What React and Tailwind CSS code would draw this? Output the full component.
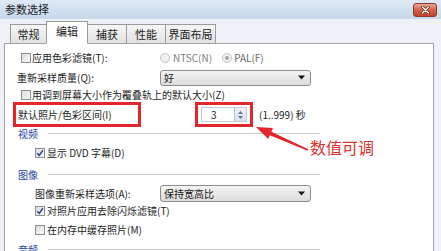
const font = "font-['Noto_Sans_CJK_SC','Noto_Sans',sans-serif]";

function Check({ on }) {
  return (
    <span className="w-[10px] h-[10px] shrink-0 border border-[#8f8f8f] bg-gradient-to-br from-[#dcdcdc] to-[#fbfbfb] flex items-center justify-center">
      {on && (
        <svg width="8" height="8" viewBox="0 0 8 8">
          <path d="M1.2 4.2 L3.2 6.4 L6.9 1.3" fill="none" stroke="#3a4f8a" strokeWidth="1.6" />
        </svg>
      )}
    </span>
  );
}

function Radio({ on }) {
  return (
    <span className="w-[10px] h-[10px] shrink-0 rounded-full border border-[#c3c3c3] bg-[#f1f1f1] flex items-center justify-center">
      {on && <span className="w-[4px] h-[4px] rounded-full bg-[#a5a5a5]" />}
    </span>
  );
}

function Select({ value, h = 'h-[16px]' }) {
  return (
    <div className={`w-[151px] ${h} border border-[#8d8d8d] rounded-[3px] bg-gradient-to-b from-[#f4f4f4] to-[#dcdcdc] flex items-center justify-between pl-[3px] pr-[5px]`}>
      <span className="text-[10px] text-[#1a1a1a]">{value}</span>
      <svg width="7" height="5" viewBox="0 0 7 5">
        <path d="M0 0.5 H7 L3.5 4.5 Z" fill="#111" />
      </svg>
    </div>
  );
}

function Header({ text }) {
  return (
    <div className="w-[315px] pl-[13px] flex items-center gap-[10px] h-full">
      <span className="text-[10px] text-[#2547a0]">{text}</span>
      <div className="flex-1 border-t border-[#c9cdd2] border-b border-b-white" />
    </div>
  );
}

const tabs = [
  { t: '常规', w: 'w-[37px]' },
  { t: '编辑', w: 'w-[42px]', on: true },
  { t: '捕获', w: 'w-[40px]' },
  { t: '性能', w: 'w-[40px]' },
  { t: '界面布局', w: 'w-[51px]' },
];

export default function App() {
  return (
    <div className={`w-[441px] h-[251px] overflow-hidden relative bg-[#eef1f5] flex flex-col ${font}`}>
      {/* title bar */}
      <div className="h-[19px] shrink-0 flex items-center justify-between pl-[5px] pr-[4px] bg-gradient-to-b from-[#dfeaf6] to-[#c6d8ec]">
        <span className="text-[11px] text-[#1c1c1c] leading-none">参数选择</span>
        <div className="w-[24px] h-[14px] rounded-[3px] border border-[#8c3b2d] bg-gradient-to-b from-[#e9a897] via-[#d2604a] to-[#c1412c] flex items-center justify-center">
          <svg width="9" height="8" viewBox="0 0 9 8">
            <path d="M1.5 1 L7.5 7 M7.5 1 L1.5 7" stroke="#5a1c12" strokeWidth="2.6" strokeLinecap="round" />
            <path d="M1.5 1 L7.5 7 M7.5 1 L1.5 7" stroke="#fff" strokeWidth="1.5" strokeLinecap="round" />
          </svg>
        </div>
      </div>

      {/* tabs */}
      <div className="h-[24px] shrink-0 flex items-end pl-[10px] relative z-10">
        {tabs.map((tab, i) => (
          <div
            key={tab.t}
            className={`${tab.w} flex items-center justify-center text-[11px] leading-none text-[#1c1c1c] border border-[#9a9a9a] ${i > 0 ? '-ml-px' : ''} ${
              tab.on
                ? 'h-[23px] bg-white border-b-white relative z-10 -mb-px pb-[2px]'
                : 'h-[19px] bg-gradient-to-b from-[#f6f6f6] to-[#e2e2e2] border-b-0'
            }`}
          >
            {tab.t}
          </div>
        ))}
      </div>

      {/* panel */}
      <div className="flex-1 ml-[4px] mr-[7px] bg-white border border-[#a3a3a3] flex flex-col pt-[5px] text-[10px] leading-none text-[#1e1e1e]">
        <div className="h-[18px] shrink-0 flex items-center pl-[16px]">
          <div className="w-[139px] flex items-center gap-[1px]">
            <Check />
            <span>应用色彩滤镜(T):</span>
          </div>
          <Radio />
          <span className="ml-[3px] text-[#7c7c7c]">NTSC(N)</span>
          <span className="ml-[10px]"><Radio on /></span>
          <span className="ml-[2px] text-[#6a6a6a]">PAL(F)</span>
        </div>

        <div className="h-[21px] shrink-0 flex items-center pl-[12px]">
          <span className="w-[143px]">重新采样质量(Q):</span>
          <Select value="好" />
        </div>

        <div className="h-[14px] shrink-0 flex items-center pl-[16px] gap-[1px]">
          <Check />
          <span>用调到屏幕大小作为覆叠轨上的默认大小(Z)</span>
        </div>

        <div className="h-[25px] shrink-0 flex items-stretch pl-[8px]">
          <div className="w-[128px] border-[3px] border-[#e3262b] flex items-center pl-[2px]">
            默认照片/色彩区间(I)
          </div>
          <div className="ml-[54px] w-[58px] border-[3px] border-[#e3262b] flex items-center pl-[3px]">
            <div className="w-[46px] h-[15px] border border-[#c8ccd2] flex items-center justify-between pl-[9px]">
              <span>3</span>
              <div className="w-[12px] h-full border-l border-[#b6c3d3] bg-gradient-to-b from-[#eef3f9] to-[#d6e1ee] flex flex-col items-center justify-center gap-[2px]">
                <svg width="5" height="3" viewBox="0 0 5 3"><path d="M0 3 L2.5 0 L5 3 Z" fill="#6b7686" /></svg>
                <svg width="5" height="3" viewBox="0 0 5 3"><path d="M0 0 L2.5 3 L5 0 Z" fill="#6b7686" /></svg>
              </div>
            </div>
          </div>
          <span className="ml-[6px] self-center">(1..999) 秒</span>
        </div>

        <div className="h-[13px] shrink-0">
          <Header text="视频" />
        </div>

        <div className="h-[26px] shrink-0 flex items-center pl-[30px] gap-[2px]">
          <Check on />
          <span>显示 DVD 字幕(D)</span>
        </div>

        <div className="h-[18px] shrink-0">
          <Header text="图像" />
        </div>

        <div className="h-[19px] shrink-0 flex items-center pl-[30px]">
          <span className="w-[125px]">图像重新采样选项(A):</span>
          <Select value="保持宽高比" h="h-[17px]" />
        </div>

        <div className="h-[16px] shrink-0 flex items-center pl-[30px] gap-[2px]">
          <Check on />
          <span>对照片应用去除闪烁滤镜(T)</span>
        </div>

        <div className="h-[22px] shrink-0 flex items-center pl-[30px] gap-[2px]">
          <Check />
          <span>在内存中缓存照片(M)</span>
        </div>

        <div className="h-[18px] shrink-0">
          <Header text="音频" />
        </div>
      </div>

      {/* annotation arrow */}
      <svg className="absolute left-[250px] top-[120px]" width="65" height="35" viewBox="0 0 65 35">
        <polygon
          points="6,7 23,8 21.4,11.7 58.3,29.3 57.7,30.7 19.8,15.3 18.2,19"
          fill="#e3262b"
        />
      </svg>
      <span className="absolute left-[310px] top-[139px] text-[16px] leading-none text-[#e0302f]">数值可调</span>
    </div>
  );
}
